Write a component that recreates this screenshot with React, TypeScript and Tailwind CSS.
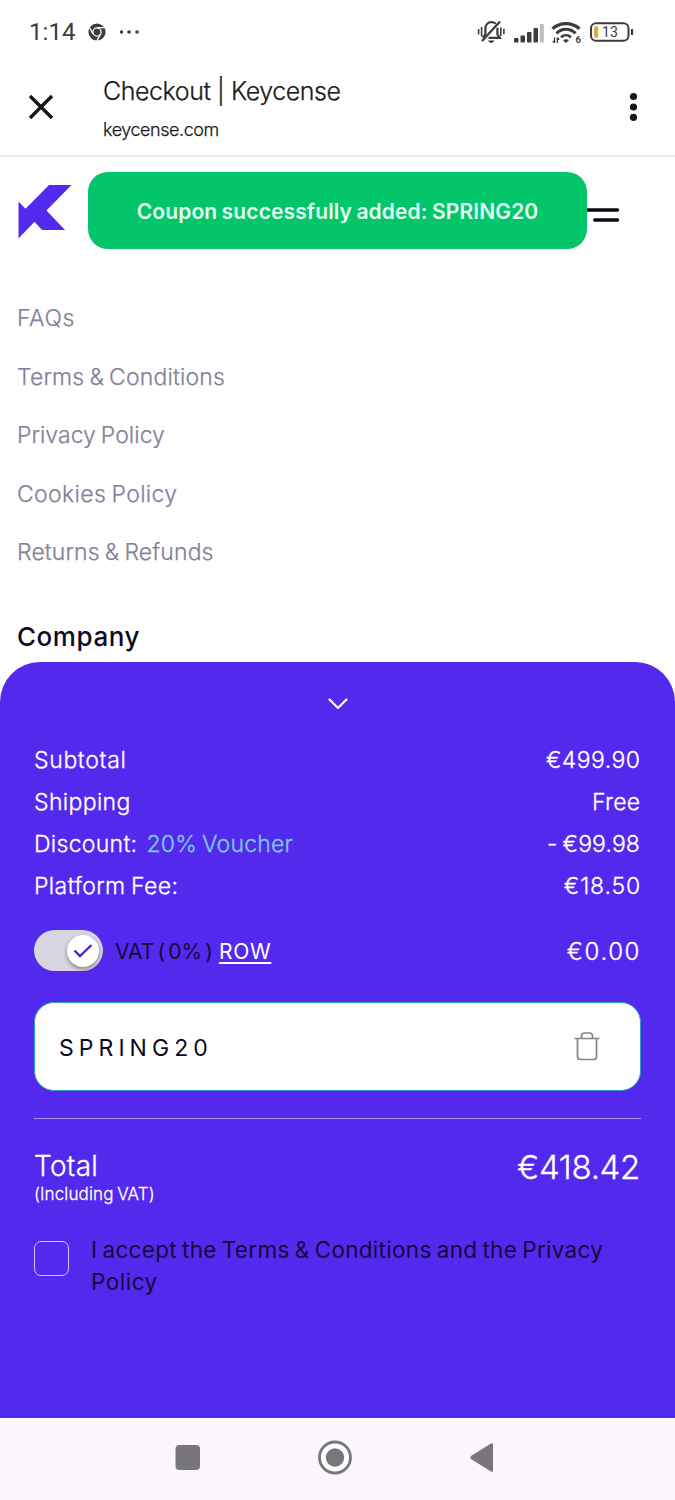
const links = [
  { label: 'FAQs', cls: 'tracking-[0.6px]' },
  { label: 'Terms & Conditions', cls: 'tracking-[0.15px]' },
  { label: 'Privacy Policy', cls: 'tracking-[0.02px]' },
  { label: 'Cookies Policy', cls: 'tracking-[0.35px]' },
  { label: 'Returns & Refunds', cls: 'tracking-[0.12px]' },
]

const rows = [
  { label: 'Subtotal', cls: 'tracking-[0.65px]', note: '', value: '€499.90', valueCls: 'tracking-[0.45px] -mr-[0.5px]' },
  { label: 'Shipping', cls: 'tracking-[0.35px]', note: '', value: 'Free', valueCls: 'tracking-[0.3px] -mr-[0.5px]' },
  { label: 'Discount:', cls: 'tracking-[0.3px]', note: '20% Voucher', value: '- €99.98', valueCls: 'tracking-[0.1px]' },
  { label: 'Platform Fee:', cls: 'tracking-[0.4px]', note: '', value: '€18.50', valueCls: 'tracking-[0.85px] -mr-px' },
]

function StatusBar() {
  return (
    <div className="flex h-16 items-center pl-[29px] pr-[40px] text-[#3c3c3e]">
      <span className="font-['Roboto'] text-[24px] leading-8 tracking-[0.1px]">1:14</span>
      <svg className="ml-[12px]" width="18" height="18" viewBox="0 0 18 18">
        <circle cx="9" cy="9" r="8.6" fill="#3c3c3e" />
        <circle cx="9" cy="9" r="4.1" fill="#3c3c3e" stroke="#fff" strokeWidth="1.3" />
        <path d="M9 4.7H17M5.3 11.2L1.3 4.3M12.7 11.2L8.7 18" stroke="#fff" strokeWidth="1.3" fill="none" />
      </svg>
      <svg className="ml-[12px]" width="22" height="6" viewBox="0 0 22 6" fill="#3c3c3e">
        <circle cx="3.5" cy="3" r="1.8" />
        <circle cx="11" cy="3" r="1.8" />
        <circle cx="19" cy="3" r="1.8" />
      </svg>
      <div className="grow" />
      <svg width="158" height="26" viewBox="0 0 158 26" fill="none" stroke="#3c3c3e">
        <path d="M1.6 10v5.500M4.600 8v9.500M23.800 8.500v8.500M26.900 9.800v5.400" strokeWidth="1.600" />
        <path d="M5.800 18.800l2.600-3.600V10C8.400 6 11 3.200 14.500 3.200c1.800 0 3.200.6 4.300 1.600M20.400 8.800v6.600l2.400 3.500H11.500" strokeWidth="2.200" />
        <path d="M5 22L23 2.500" strokeWidth="2.300" />
        <path d="M11 21.500h6.500c-.7 1.700-2 2.400-3.200 2.400s-2.600-.7-3.300-2.400z" fill="#3c3c3e" stroke="none" />
        <g fill="#3c3c3e" stroke="none">
          <rect x="37" y="19" width="4.500" height="4.500" rx="1" />
          <rect x="43.500" y="16.500" width="4.500" height="7" rx="1" />
          <rect x="50" y="13" width="4.500" height="10.500" rx="1" />
          <rect x="56.500" y="9" width="4.500" height="14.500" rx="1" />
          <rect x="62.800" y="5" width="4" height="18.500" rx="1" fill="#bdbdbf" />
        </g>
        <path d="M75.500 9.800C83 3 95 3 102.500 9.800" strokeWidth="3.200" />
        <path d="M79.500 14.300C85 9 93 9 98.500 14.300" strokeWidth="3" />
        <path d="M84 18.200C87 15.500 91 15.500 94 18.200" strokeWidth="2.600" />
        <path d="M86 21.200c1.800-1.400 4.200-1.400 6 0L89 24z" fill="#3c3c3e" stroke="none" />
        <path d="M77.500 18.500v5.500M80.300 18.500v5.500M75.700 22l1.800 1.600M80.300 18.800l1.900 1.700" strokeWidth="1.300" />
        <text x="98.500" y="24" fontSize="9.500" fontWeight="700" fontFamily="Roboto, sans-serif" fill="#3c3c3e" stroke="none">6</text>
        <rect x="114" y="4.200" width="37.500" height="17.500" rx="5" strokeWidth="2" />
        <rect x="117" y="7" width="4.200" height="12" rx="2" fill="#e0a540" stroke="none" />
        <text x="125" y="18" fontSize="14" letterSpacing="0.2" fontWeight="400" fontFamily="Roboto, sans-serif" fill="#3c3c3e" stroke="none">13</text>
        <path d="M155 10v6" strokeWidth="2.200" />
      </svg>
    </div>
  )
}

function BrowserBar() {
  return (
    <div className="flex h-[93px] items-start border-b-2 border-[#e8e8e8] pl-[28px] pr-[37px] text-[#1a1a1a]">
      <svg className="mt-[30px]" width="26" height="26" viewBox="0 0 26 26" stroke="#161616" strokeWidth="3.400">
        <path d="M2 2L24 24M24 2L2 24" />
      </svg>
      <div className="ml-[49px] flex flex-col pt-[11px] font-light [-webkit-text-stroke:0.25px]">
        <span className="text-[25px] leading-8 tracking-[-0.45px]">Checkout | Keycense</span>
        <span className="mt-[8px] text-[18px] leading-[29px] tracking-[-0.45px]">keycense.com</span>
      </div>
      <div className="grow" />
      <svg className="mt-[28px]" width="10" height="30" viewBox="0 0 10 30" fill="#161616">
        <circle cx="5.500" cy="4.500" r="3.600" />
        <circle cx="5.500" cy="15" r="3.600" />
        <circle cx="5.500" cy="25.300" r="3.600" />
      </svg>
    </div>
  )
}

function SiteHeader() {
  return (
    <div className="relative flex h-[115px] items-start justify-between pl-[18px] pr-[55px] pt-[27px]">
      <svg width="54" height="55" viewBox="0 0 54 55" fill="#5429ee">
        <path d="M0.500 17.500L7.500 24.700L31 1H53.500L28.500 26.500L47 46H24L16.500 37.700L0.500 54.500Z" />
      </svg>
      <svg className="mt-[23px]" width="34" height="18" viewBox="0 0 34 18" stroke="#0b0b14" strokeWidth="3.400" strokeLinecap="round">
        <path d="M1 3H31.500M8.800 13H31.500" />
      </svg>
      <div className="absolute left-[88px] top-[15px] flex h-[77px] w-[499px] items-center justify-center rounded-[20px] bg-[#03c66b] pt-[2px]">
        <span className="text-[21px] leading-8 font-semibold tracking-[0.130px] [word-spacing:-1.100px] whitespace-nowrap text-[#e2fff0]">
          Coupon successfully added: SPRING20
        </span>
      </div>
    </div>
  )
}

function SummaryPanel() {
  return (
    <section className="relative flex h-[756px] flex-col rounded-t-[40px] bg-[#5429ee] pl-[34px] pr-[35px] text-white">
      <div className="flex h-[77px] justify-center pt-[35px] pl-px">
        <svg width="22" height="14" viewBox="0 0 22 14" fill="none" stroke="#fff" strokeWidth="2.200" strokeLinecap="round" strokeLinejoin="round">
          <path d="M2.500 2.500L11 11L19.500 2.500" />
        </svg>
      </div>
      {rows.map((r) => (
        <div key={r.label} className="flex h-[42px] items-center justify-between text-[23px] leading-[42px] font-light [word-spacing:-1.500px] [-webkit-text-stroke:0.3px]">
          <span className={r.cls}>
            {r.label}
            {r.note && <span className="ml-[9px] tracking-[0.200px] text-[#7bcbe0]">{r.note}</span>}
          </span>
          <span className={r.valueCls}>{r.value}</span>
        </div>
      ))}
      <div className="mt-[23px] flex h-[41px] items-center">
        <div className="flex h-[41px] w-[69px] items-center justify-end rounded-full bg-[#d8d5e2] pr-[4px]">
          <div className="flex size-[32px] items-center justify-center rounded-full bg-white shadow-[0_2px_4px_rgba(0,0,0,0.4)]">
            <svg width="20" height="16" viewBox="0 0 20 16" fill="none" stroke="#4b27c8" strokeWidth="2.400">
              <path d="M1.500 7.500L7 13L18.500 2" />
            </svg>
          </div>
        </div>
        <span className="ml-[12px] pt-[2px] text-[21px] tracking-[-0.050px] [word-spacing:-2.600px] whitespace-pre text-[#130a3c]">VAT ( 0% )</span>
        <span className="ml-[6px] pt-[2px] text-[21px] tracking-[0.700px] underline decoration-[2px] underline-offset-[3px]">ROW</span>
        <span className="-mr-[1px] ml-auto pt-[2px] text-[24px] leading-8 font-light tracking-[1.600px] [-webkit-text-stroke:0.3px]">€0.00</span>
      </div>
      <div className="mt-[31px] flex h-[89px] w-[607px] items-center justify-between rounded-[20px] border-[1.500px] border-[#2e9fc4] bg-white pr-[40px] pl-[24px]">
        <span className="pt-[3px] text-[23px] tracking-[5.050px] text-[#0b0b1e]">SPRING20</span>
        <svg className="-mt-px" width="26" height="30" viewBox="0 0 26 30" fill="none" stroke="#85838f" strokeWidth="1.700">
          <path d="M0.500 7.500H25.500M3.500 7.500V25.500Q3.500 28.500 6.500 28.500H19.500Q22.500 28.500 22.500 25.500V7.500M7.500 7V5Q7.500 2 10.500 2H15.500Q18.500 2 18.500 5V7" />
        </svg>
      </div>
      <div className="mt-[27px] h-px w-[607px] shrink-0 bg-[#ab96f7]" />
      <div className="mt-[29px] flex items-start justify-between font-light [-webkit-text-stroke:0.3px]">
        <div className="flex flex-col">
          <span className="text-[28px] leading-9 tracking-[0.300px]">Total</span>
          <span className="-mt-px text-[17px] leading-[22px] tracking-[0.120px] [word-spacing:-1.200px]">(Including VAT)</span>
        </div>
        <span className="text-[33px] leading-[38px] tracking-[-0.320px]">€418.42</span>
      </div>
      <div className="mt-[29px] flex items-start">
        <span className="mt-[7px] size-[35px] shrink-0 rounded-[7px] border-[1.500px] border-[#cfc4fb]" />
        <p className="ml-[22px] text-[22.500px] leading-8 tracking-[0.300px] [word-spacing:-1.500px] whitespace-nowrap text-[#130a3c]">
          I accept the Terms & Conditions and the Privacy
          <br />
          <span className="tracking-[0.500px]">Policy</span>
        </p>
      </div>
    </section>
  )
}

function NavBar() {
  return (
    <nav className="flex h-[82px] items-start bg-[#fcf6ff] pl-[175px] pt-[22px]">
      <svg width="320" height="36" viewBox="0 0 320 36" fill="#79767b">
        <rect x="0.500" y="5" width="24.500" height="25" rx="4" />
        <circle cx="160" cy="17.500" r="15.500" fill="#fff" stroke="#79767b" strokeWidth="2.800" />
        <circle cx="160" cy="17.500" r="9.200" />
        <path d="M296.500 16.800L317 4.200V30.800L296.500 18.200Z" stroke="#79767b" strokeWidth="2" strokeLinejoin="round" />
      </svg>
    </nav>
  )
}

export default function App() {
  return (
    <div className="flex h-[1500px] w-[675px] flex-col overflow-hidden bg-white font-['Inter','Noto_Sans',sans-serif]">
      <StatusBar />
      <BrowserBar />
      <SiteHeader />
      <div className="flex h-[390px] flex-col pl-[17px] pt-[17px]">
        {links.map((l) => (
          <a key={l.label} className={`h-[58.5px] text-[23px] leading-[58.500px] font-light [word-spacing:-1.500px] [-webkit-text-stroke:0.25px] text-[#84829a] ${l.cls}`}>
            {l.label}
          </a>
        ))}
        <h2 className="mt-[35px] text-[26px] leading-[40px] font-medium tracking-[0.550px] text-[#0b0b24]">Company</h2>
      </div>
      <SummaryPanel />
      <NavBar />
    </div>
  )
}
